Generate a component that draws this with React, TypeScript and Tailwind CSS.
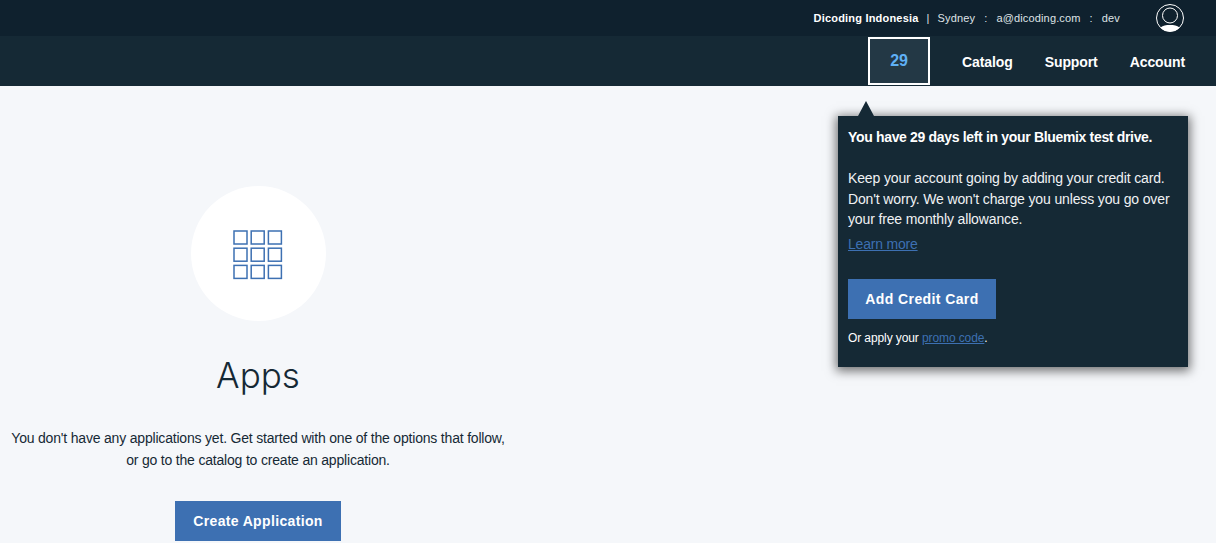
import { ReactNode } from "react";

const font = "font-['Liberation_Sans',Arial,sans-serif]";

function NavLink({ children }: { children: ReactNode }) {
  return <a className="text-[14px] font-bold tracking-[-0.1px] text-white">{children}</a>;
}

function AppsIcon() {
  const cells = [0, 1, 2];
  return (
    <svg className="mt-[2px]" width="50" height="50" viewBox="0 0 50 50" fill="none" stroke="#3d70b2" strokeWidth="1.5">
      {cells.map((r) =>
        cells.map((c) => (
          <rect key={`${r}-${c}`} x={1 + c * 17.2} y={1 + r * 17.2} width="13" height="13" />
        ))
      )}
    </svg>
  );
}

function Avatar() {
  return (
    <svg width="28" height="28" viewBox="0 0 28 28" fill="none">
      <circle cx="14" cy="14" r="13.5" stroke="#fff" strokeWidth="1" />
      <circle cx="14" cy="11.5" r="7.5" stroke="#fff" strokeWidth="1" />
      <path d="M4.5 23.5 C7 21.5 10 21 14 21 C18 21 21 21.5 23.5 23.5 C21 26.5 17.5 27.5 14 27.5 C10.5 27.5 7 26.5 4.5 23.5 Z" fill="#fff" />
    </svg>
  );
}

function TrialPopover() {
  return (
    <div className="absolute left-[838px] top-[116px] h-[251px] w-[350px] bg-[#152935] px-[10px] pt-[11px] text-white shadow-[0_2px_10px_2px_rgba(0,0,0,0.55)]">
      <div className="absolute left-[20px] top-[-15px] h-0 w-0 border-x-[8px] border-b-[15px] border-x-transparent border-b-[#152935]" />
      <p className="text-[14px] leading-[20px] font-bold tracking-[-0.33px]">
        You have 29 days left in your Bluemix test drive.
      </p>
      <p className="mt-[21px] text-[14px] leading-[20.5px] tracking-[-0.14px] text-[#f0f2f4]">
        Keep your account going by adding your credit card.
        <br />
        Don't worry. We won't charge you unless you go over
        <br />
        your free monthly allowance.
      </p>
      <a className="mt-[4px] block text-[14px] leading-[20px] tracking-[-0.2px] text-[#3d70b2] underline">Learn more</a>
      <button className="mt-[25px] block h-[40px] w-[148px] bg-[#3d70b2] pt-[2px] text-[14px] font-bold tracking-[0.4px] text-white">
        Add Credit Card
      </button>
      <p className="mt-[10px] text-[12px] leading-[18px] tracking-[-0.1px] text-white">
        Or apply your <a className="text-[#3d70b2] underline">promo code</a>.
      </p>
    </div>
  );
}

export default function App() {
  return (
    <div className={`relative h-[543px] w-[1216px] overflow-hidden bg-[#f5f7fa] ${font}`}>
      <header>
        <div className="flex h-9 items-center justify-end bg-[#0f212e] pr-[32px] text-[11px] tracking-[0.15px] text-[#dfe3e6]">
          <b className="font-bold tracking-[0.2px] text-white">Dicoding Indonesia</b>
          <span className="mx-[8px]">|</span>
          <span>Sydney</span>
          <span className="mx-[9px]">:</span>
          <span>a@dicoding.com</span>
          <span className="mx-[9px]">:</span>
          <span>dev</span>
          <span className="ml-[36px]">
            <Avatar />
          </span>
        </div>
        <nav className="flex h-[50px] items-center justify-end bg-[#152935] pr-[31px]">
          <div className="flex h-[48px] w-[62px] items-center justify-center border-2 border-white bg-[#233845] text-[16px] font-bold text-[#5fb0f5]">
            29
          </div>
          <div className="ml-[32px] flex gap-[32px] pt-[2px]">
            <NavLink>Catalog</NavLink>
            <NavLink>Support</NavLink>
            <NavLink>Account</NavLink>
          </div>
        </nav>
      </header>

      <main className="flex w-[516px] flex-col items-center pt-[100px] text-[#152935]">
        <div className="flex h-[135px] w-[135px] items-center justify-center rounded-full bg-white">
          <AppsIcon />
        </div>
        <h1 className="mt-[29px] font-['Inter',sans-serif] text-[35px] leading-[50px] font-light">Apps</h1>
        <p className="mt-[27px] text-center text-[14px] leading-[22px] tracking-[-0.19px]">
          You don't have any applications yet. Get started with one of the options that follow,
          <br />
          or go to the catalog to create an application.
        </p>
        <button className="mt-[30px] h-[40px] w-[166px] bg-[#3d70b2] text-[14px] font-bold tracking-[0.35px] text-white">
          Create Application
        </button>
      </main>

      <TrialPopover />
    </div>
  );
}
